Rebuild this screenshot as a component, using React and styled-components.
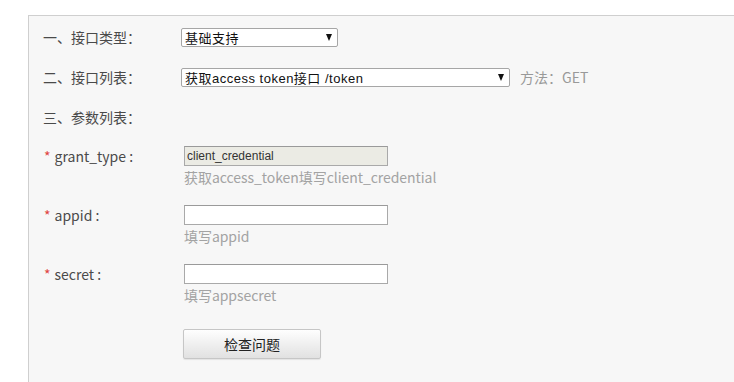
import React from 'react';
import styled, { createGlobalStyle } from 'styled-components';

const GlobalStyle = createGlobalStyle`
  html, body {
    margin: 0;
    padding: 0;
    background: #fff;
    overflow: hidden;
  }
  body {
    font-family: "Noto Sans CJK SC", "Noto Sans", sans-serif;
  }
`;

const Panel = styled.div`
  margin: 15px 0 0 28px;
  height: calc(100vh - 15px);
  box-sizing: border-box;
  border-top: 1px solid #cfcfcf;
  border-left: 1px solid #cfcfcf;
  background: #f7f7f7;
  padding: 12px 0 0 14px;
`;

const Row = styled.div`
  display: flex;
  align-items: center;
  height: ${p => p.h || 18}px;
  margin-bottom: ${p => p.mb || 0}px;
`;

const Label = styled.div`
  width: 138px;
  flex: none;
  font-size: 14px;
  line-height: 18px;
  color: #4a4a4a;
  white-space: nowrap;
`;

const Star = styled.span`
  color: #e0443f;
  margin: 0 4px 0 1px;
`;

const FakeSelect = styled.div`
  box-sizing: border-box;
  width: ${p => p.w}px;
  height: 19px;
  display: flex;
  align-items: center;
  padding: 0 5px 0 3px;
  background: #fff;
  border: 1px solid #a6a6a6;
  border-radius: 2px;
  font-family: "Liberation Sans", "Noto Sans CJK SC", sans-serif;
  font-size: 13px;
  letter-spacing: 0.5px;
  color: #111;
  overflow: hidden;
`;

const SelectText = styled.span`
  flex: 1;
  white-space: nowrap;
  overflow: hidden;
`;

const Arrow = styled.span`
  width: 0;
  height: 0;
  border-left: 3.5px solid transparent;
  border-right: 3.5px solid transparent;
  border-top: 7px solid #111;
`;

const Method = styled.span`
  margin-left: 10px;
  font-size: 14px;
  color: #999;
`;

const Param = styled.div`
  display: flex;
  margin-bottom: ${p => p.mb}px;
`;

const ParamLabel = styled(Label)`
  line-height: 20px;
`;

const Field = styled.div`
  display: flex;
  flex-direction: column;
  margin-left: 3px;
`;

const Input = styled.input`
  box-sizing: border-box;
  width: 204px;
  height: 20px;
  margin: 0;
  padding: 0 2px;
  border: 1px solid #a9a9a9;
  border-top-color: #9a9a9a;
  background: ${p => (p.readOnly ? '#ebebe4' : '#fff')};
  font-family: "Liberation Sans", sans-serif;
  font-size: 12px;
  color: #333;
  outline: none;
`;

const Hint = styled.div`
  margin-top: 1px;
  font-size: 14px;
  line-height: 20px;
  letter-spacing: -0.05px;
  color: #a3a3a3;
  white-space: nowrap;
`;

const Button = styled.button`
  margin-left: 140px;
  width: 138px;
  height: 30px;
  border: 1px solid #c6c6c6;
  border-radius: 2px;
  background: linear-gradient(#fefefe, #e1e1e1);
  box-shadow: 0 1px 1px rgba(0, 0, 0, 0.08);
  font-family: "Noto Sans CJK SC", sans-serif;
  font-size: 14px;
  color: #222;
  cursor: pointer;
`;

const params = [
  { name: 'grant_type', value: 'client_credential', hint: '获取access_token填写client_credential', readOnly: true },
  { name: 'appid', value: '', hint: '填写appid' },
  { name: 'secret', value: '', hint: '填写appsecret' },
];

export default function App() {
  return (
    <>
      <GlobalStyle />
      <Panel>
        <Row mb={22}>
          <Label>一、接口类型：</Label>
          <FakeSelect w={157}>
            <SelectText>基础支持</SelectText>
            <Arrow />
          </FakeSelect>
        </Row>
        <Row mb={22}>
          <Label>二、接口列表：</Label>
          <FakeSelect w={329}>
            <SelectText>获取access token接口 /token</SelectText>
            <Arrow />
          </FakeSelect>
          <Method>方法：GET</Method>
        </Row>
        <Row mb={20}>
          <Label>三、参数列表：</Label>
        </Row>
        {params.map((p, i) => (
          <Param key={p.name} mb={i === params.length - 1 ? 24 : 18}>
            <ParamLabel>
              <Star>*</Star>
              {p.name} :
            </ParamLabel>
            <Field>
              <Input readOnly={p.readOnly} defaultValue={p.value} />
              <Hint>{p.hint}</Hint>
            </Field>
          </Param>
        ))}
        <Button>检查问题</Button>
      </Panel>
    </>
  );
}
